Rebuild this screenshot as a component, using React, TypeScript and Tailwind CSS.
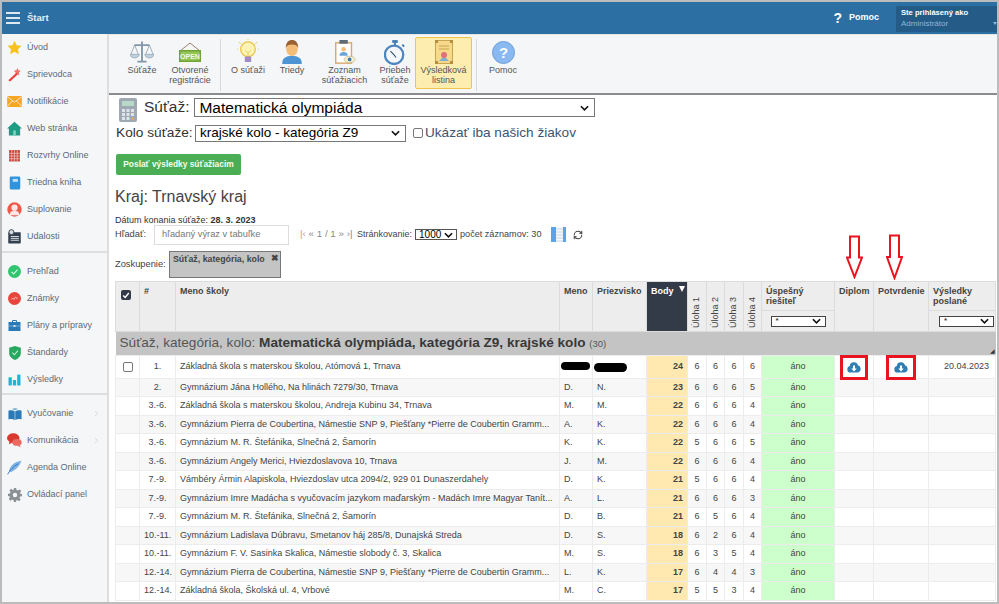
import { type ReactNode } from "react";
import { ChevronRight, RefreshCw } from "lucide-react";

const Svg = ({ children, w = 15, h = 15, box = "0 0 24 24" }: { children: ReactNode; w?: number; h?: number; box?: string }) => (
  <svg width={w} height={h} viewBox={box} className="shrink-0">
    {children}
  </svg>
);

const sideIcons: Record<string, ReactNode> = {
  star: <Svg><path d="M12 1l3.400 7.300 7.800 1-5.700 5.400 1.500 7.900L12 18.700l-7 3.900 1.500-7.900L.8 9.300l7.800-1z" fill="#f7c21e" /></Svg>,
  wand: <Svg><path d="M2 21l13-12 2.500 2.500L5 23z" fill="#e8453c" /><path d="M17 1l1 4 4 1-3 3 1 4-4-2-3 2 1-4-3-3 4-1z" fill="#e8453c" opacity=".75" /></Svg>,
  mail: <Svg w={15} h={11} box="0 0 24 18"><rect width="24" height="18" fill="#f5a623" /><path d="M0 1l12 9 12-9M0 17l9-9M24 17l-9-9" stroke="#fff" fill="none" strokeWidth="1.200" /></Svg>,
  home: <Svg><path d="M12 1L0 12h3v11h18V12h3z" fill="#1e9c84" /><rect x="10" y="15" width="4" height="8" fill="#8fd0c2" /></Svg>,
  grid: <Svg w={13} h={13}><rect x="2" y="2" width="20" height="21" fill="#c9443a" /><path d="M2 8h20M2 13h20M2 18h20M7 2v21M12 2v21M17 2v21" stroke="#f5d5d0" strokeWidth="1.200" /></Svg>,
  book: <Svg w={14} h={14}><rect x="3" y="1" width="18" height="22" rx="2" fill="#2f93dd" /><rect x="8" y="5" width="9" height="5" fill="#bfe0f7" /></Svg>,
  sub: <Svg><circle cx="12" cy="12" r="11.500" fill="#ee5a4a" /><circle cx="12" cy="9" r="5" fill="#fff" opacity=".85" /><path d="M4 21c1-6 4-7 8-7s7 1 8 7z" fill="#fff" opacity=".85" /></Svg>,
  board: <Svg><rect x="2" y="5" width="20" height="18" rx="1" fill="#33404f" /><circle cx="7" cy="5" r="4" fill="#d8dde2" stroke="#33404f" strokeWidth="1.500" /><path d="M6 12h13M6 15h13M6 18h13" stroke="#fff" strokeWidth="1.300" /></Svg>,
  check: <Svg w={13} h={13}><circle cx="12" cy="12" r="12" fill="#30c46f" /><path d="M6.500 12.500l4 4 7-8" stroke="#d8f7e5" strokeWidth="2" fill="none" /></Svg>,
  grade: <Svg w={13} h={13}><circle cx="12" cy="12" r="12" fill="#e8453c" /><path d="M6 14l3-3 2 3 3-5 2 3 2-1" stroke="#f7c6c2" strokeWidth="1.500" fill="none" /></Svg>,
  case: <Svg w={13} h={11} box="0 0 24 22"><path d="M8 4V1h8v3" fill="none" stroke="#2a7ab8" strokeWidth="2" /><rect y="4" width="24" height="18" fill="#2a7ab8" /><path d="M0 12h24" stroke="#cfe3f2" /><rect x="10" y="10" width="4" height="4" fill="#cfe3f2" /></Svg>,
  shield: <Svg w={14} h={14}><path d="M12 0l10 3v9c0 6-5 10-10 12C7 22 2 18 2 12V3z" fill="#27a75f" /><path d="M7.500 11.500l3.500 3.500 6-7" stroke="#c6f0d8" strokeWidth="1.800" fill="none" /></Svg>,
  bars: <Svg w={13} h={13}><rect x="1" y="8" width="6" height="15" fill="#19b5d8" /><rect x="9" y="13" width="6" height="10" fill="#19b5d8" /><rect x="17" y="3" width="6" height="20" fill="#19b5d8" /></Svg>,
  open: <Svg w={14} h={12} box="0 0 24 22"><path d="M0 5c4-1 8-1 11.500 1v16C8 20 4 20 0 21zM24 5c-4-1-8-1-11.500 1v16c3.500-2 7.500-2 11.500-1z" fill="#2a7ab8" /><path d="M6 2l6-2 6 2-6 2z" fill="#7ab4dc" /></Svg>,
  chat: <Svg><ellipse cx="10" cy="8" rx="10" ry="7.500" fill="#d9392e" /><path d="M4 13l-1 5 6-3z" fill="#d9392e" /><ellipse cx="16" cy="15" rx="7.500" ry="5.500" fill="#e96a60" /><path d="M20 19l2 4-6-3z" fill="#e96a60" /></Svg>,
  pen: <Svg><path d="M23 1C13 2 5 8 3 18l3 1C12 17 20 11 23 1z" fill="#7fb2e5" /><path d="M1 23C5 16 10 10 18 6" stroke="#2f78c4" strokeWidth="1.500" fill="none" /></Svg>,
  gear: <Svg w={14} h={14}><path d="M10 0h4l.6 3.400 2.500 1 2.800-2 2.800 2.800-2 2.800 1 2.500L24 10v4l-3.300.6-1 2.500 2 2.800-2.800 2.800-2.800-2-2.500 1L14 24h-4l-.6-3.300-2.500-1-2.800 2-2.800-2.800 2-2.800-1-2.500L0 14v-4l3.400-.6 1-2.500-2-2.800L5.200 1.300l2.800 2 2.500-1z" fill="#8b9094" /><circle cx="12" cy="12" r="3.800" fill="#f5f6f8" /></Svg>,
};

const menu = [
  [["star", "Úvod"], ["wand", "Sprievodca"], ["mail", "Notifikácie"], ["home", "Web stránka"], ["grid", "Rozvrhy Online"], ["book", "Triedna kniha"], ["sub", "Suplovanie"], ["board", "Udalosti"]],
  [["check", "Prehľad"], ["grade", "Známky"], ["case", "Plány a prípravy"], ["shield", "Štandardy"], ["bars", "Výsledky"]],
  [["open", "Vyučovanie", ">"], ["chat", "Komunikácia", ">"], ["pen", "Agenda Online"], ["gear", "Ovládací panel"]],
];

const toolIcons: Record<string, ReactNode> = {
  scales: <Svg w={24} h={24} box="0 0 26 25"><path d="M13 1v21M5 5h16M8 23h10" stroke="#8296a8" strokeWidth="2" fill="none" /><path d="M5 5L1 15M5 5l4 10M21 5l-4 10M21 5l4 10" stroke="#8296a8" strokeWidth=".8" /><path d="M0 15h10a5 4 0 0 1-10 0zM16 15h10a5 4 0 0 1-10 0z" fill="#bcd0e0" stroke="#8296a8" strokeWidth=".6" /></Svg>,
  open: <Svg w={22} h={20} box="0 0 22 20"><path d="M1 9l10-8 10 8" stroke="#99806a" fill="none" /><rect y="8" width="22" height="12" fill="#6fa336" /><rect x="1.500" y="9.500" width="19" height="9" fill="#93c653" /><text x="11" y="16.800" textAnchor="middle" fontSize="7" fontWeight="700" fill="#f4fbe6" fontFamily="Liberation Sans">OPEN</text></Svg>,
  bulb: <Svg w={22} h={26} box="0 0 24 28"><circle cx="12" cy="11" r="8" fill="#fff3b5" stroke="#e8c64c" strokeWidth="1.500" /><path d="M9 12l3 3 3-3M12 15v4" stroke="#e8c64c" fill="none" /><rect x="8.500" y="19" width="7" height="6" rx="1" fill="#a08bc4" /><path d="M12 0v1M2 3l2 2M22 3l-2 2M0 11h1M24 11h-1" stroke="#e8c64c" /></Svg>,
  user: <Svg w={20} h={24} box="0 0 22 27"><path d="M0 27c0-7 4-9 11-9s11 2 11 9z" fill="#4d94d4" /><ellipse cx="11" cy="10" rx="6.500" ry="8" fill="#f3bd78" /><path d="M4 9c0-6 3-9 7-9s7 3 7 9c-1-3-3-4-7-4s-6 1-7 4z" fill="#9a6133" /></Svg>,
  clip: <Svg w={22} h={25} box="0 0 22 27"><rect x="1" y="3" width="17" height="22" fill="#fff" stroke="#d9a66c" strokeWidth="1.500" /><rect x="5" y="0" width="9" height="4" fill="#5d6a78" /><circle cx="9.500" cy="10" r="2.500" fill="#f3bd78" /><path d="M5 17c0-3 2-4 4.500-4s4.500 1 4.500 4z" fill="#6aa5dc" /><ellipse cx="16" cy="21" rx="6" ry="3.500" fill="#f3f0d0" stroke="#b9a560" strokeWidth=".6" /><circle cx="16" cy="21" r="2" fill="#3f78b0" /></Svg>,
  watch: <Svg w={22} h={25} box="0 0 24 27"><rect x="9" y="0" width="6" height="3" fill="#3f78b0" /><path d="M12 3v3M20 5l2 2" stroke="#3f78b0" strokeWidth="2" /><circle cx="11" cy="16" r="10" fill="#f4f8fc" stroke="#4d86bf" strokeWidth="2.500" /><path d="M11 16L7 12M11 16l2 3" stroke="#33506e" strokeWidth="1.200" /></Svg>,
  cert: <Svg w={18} h={24} box="0 0 18 24"><rect x=".5" y=".5" width="17" height="23" fill="#f6d98a" stroke="#c7a550" /><rect width="3" height="3" fill="#b58f3e" /><rect x="15" width="3" height="3" fill="#b58f3e" /><rect y="21" width="3" height="3" fill="#b58f3e" /><rect x="15" y="21" width="3" height="3" fill="#b58f3e" /><path d="M4 6h10M4 9h10" stroke="#c7a550" /><path d="M4 21l5-5 5 5z" fill="#7fb0d0" /><circle cx="9" cy="15" r="3" fill="#e0707c" /></Svg>,
  help: <Svg w={23} h={23} box="0 0 23 23"><circle cx="11.500" cy="11.500" r="11" fill="#8ab8f0" stroke="#6d9fd8" /><text x="11.500" y="17" textAnchor="middle" fontSize="15" fontWeight="700" fill="#fff" fontFamily="Liberation Sans">?</text></Svg>,
};

const tools = [
  { icon: "scales", lines: ["Súťaže"], w: "w-[48px]" },
  { icon: "open", lines: ["Otvorené", "registrácie"], w: "w-[48px]" },
  { sep: "ml-[6px] mr-[5px]" },
  { icon: "bulb", lines: ["O súťaži"], w: "w-[44px]" },
  { icon: "user", lines: ["Triedy"], w: "w-[44px]" },
  { icon: "clip", lines: ["Zoznam", "súťažiacich"], w: "w-[61px]" },
  { icon: "watch", lines: ["Priebeh", "súťaže"], w: "w-[40px]" },
  { icon: "cert", lines: ["Výsledková", "listina"], w: "w-[57px]", active: true },
  { sep: "ml-[4px] mr-[2px]" },
  { icon: "help", lines: ["Pomoc"], w: "w-[48px]" },
];

const rows = [
  ["2.", "Gymnázium Jána Hollého, Na hlinách 7279/30, Trnava", "D.", "N.", 23, 6, 6, 6, 5],
  ["3.-6.", "Základná škola s materskou školou, Andreja Kubinu 34, Trnava", "M.", "M.", 22, 6, 6, 6, 4],
  ["3.-6.", "Gymnázium Pierra de Coubertina, Námestie SNP 9, Piešťany *Pierre de Coubertin Gramm...", "A.", "K.", 22, 6, 6, 6, 4],
  ["3.-6.", "Gymnázium M. R. Štefánika, Slnečná 2, Šamorín", "K.", "K.", 22, 5, 6, 6, 5],
  ["3.-6.", "Gymnázium Angely Merici, Hviezdoslavova 10, Trnava", "J.", "M.", 22, 6, 6, 6, 4],
  ["7.-9.", "Vámbéry Ármin Alapiskola, Hviezdoslav utca 2094/2, 929 01 Dunaszerdahely", "D.", "K.", 21, 5, 6, 6, 4],
  ["7.-9.", "Gymnázium Imre Madácha s vyučovacím jazykom maďarským - Madách Imre Magyar Tanít...", "A.", "L.", 21, 6, 6, 6, 3],
  ["7.-9.", "Gymnázium M. R. Štefánika, Slnečná 2, Šamorín", "D.", "B.", 21, 6, 5, 6, 4],
  ["10.-11.", "Gymnázium Ladislava Dúbravu, Smetanov háj 285/8, Dunajská Streda", "D.", "S.", 18, 6, 2, 6, 4],
  ["10.-11.", "Gymnázium F. V. Sasinka Skalica, Námestie slobody č. 3, Skalica", "M.", "S.", 18, 6, 3, 5, 4],
  ["12.-14.", "Gymnázium Pierra de Coubertina, Námestie SNP 9, Piešťany *Pierre de Coubertin Gramm...", "L.", "K.", 17, 6, 4, 4, 3],
  ["12.-14.", "Základná škola, Školská ul. 4, Vrbové", "M.", "C.", 17, 5, 5, 3, 4],
];

const CloudDown = () => (
  <svg width="14" height="11" viewBox="0 0 28 22">
    <path d="M7 21a6.500 6.500 0 0 1-1.500-12.800A8.500 8.500 0 0 1 22 6.500 7.500 7.500 0 0 1 21.500 21z" fill="#2f7fb5" />
    <path d="M12 7h4v6h3.500L14 19l-5.500-6H12z" fill="#fff" />
  </svg>
);

const td = "border border-[#ececec] px-1 text-[9px] text-[#444] whitespace-nowrap";
const th = "border border-[#dcdcdc] bg-[#ededed] px-1 py-[4px] text-left align-top text-[9px] font-bold text-[#444] leading-[10px]";

function Arrow({ size = 6 }: { size?: number }) {
  return (
    <svg width={size + 3} height={size} viewBox="0 0 10 6"><path d="M1 1l4 4 4-4" stroke="#111" strokeWidth="1.800" fill="none" /></svg>
  );
}

function FilterSelect({ shift = "mx-auto" }: { shift?: string }) {
  return (
    <div className={`${shift} flex h-[11px] w-[55px] items-center justify-between border border-[#444] bg-white px-1 text-[8px] leading-none text-[#444]`}>
      <span>*</span>
      <Arrow />
    </div>
  );
}

export default function App() {
  return (
    <div className="relative h-[604px] w-[999px] overflow-hidden bg-[#bcbcbc] p-[2px] font-['Liberation_Sans',Arial,sans-serif]">
      <div className="flex h-[600px] flex-col overflow-hidden bg-white">
        <header className="flex h-[32px] shrink-0 items-center bg-[#2c6fa3] text-white">
          <div className="ml-[4px] flex w-[14px] flex-col gap-[3px]">
            <span className="h-[2px] bg-[#dce8f2]" /><span className="h-[2px] bg-[#dce8f2]" /><span className="h-[2px] bg-[#dce8f2]" />
          </div>
          <span className="ml-[7px] text-[9.500px] font-bold text-[#e6eff6]">Štart</span>
          <span className="ml-auto mr-[7px] text-[14px] font-bold">?</span>
          <span className="mr-[17px] text-[9px] font-bold">Pomoc</span>
          <div className="relative mb-[-1px] h-[26px] w-[101px] rounded-tl-[2px] bg-[#245b87] pl-[5px] pt-[1px] leading-[11px]">
            <div className="text-[7.600px] font-bold text-white">Ste prihlásený ako</div>
            <div className="text-[8px] text-[#8fb6d8]">Administrátor</div>
            <span className="absolute bottom-[7px] right-0 border-x-[2px] border-t-[3px] border-x-transparent border-t-[#8fb6d8]" />
          </div>
        </header>

        <div className="flex min-h-0 flex-1">
          <aside className="w-[107px] shrink-0 border-r-2 border-[#dedede] bg-[#f5f6f8]">
            {menu.map((group, gi) => (
              <div key={gi} className={gi === 0 ? "pb-[1px]" : "border-t-2 border-[#dedede] pt-[5px]"}>
                {group.map(([icon, label, more]) => (
                  <div key={label} className="flex h-[27px] items-center text-[9px] text-[#5e6a75]">
                    <span className="flex w-[25px] shrink-0 justify-center">{sideIcons[icon]}</span>
                    <span className="whitespace-nowrap">{label}</span>
                    {more && <ChevronRight size={9} className="ml-auto mr-[6px] text-[#ccc]" />}
                  </div>
                ))}
              </div>
            ))}
          </aside>

          <main className="min-w-0 flex-1">
            <div className="flex h-[61px] items-start border-b-2 border-t border-b-[#8b8b8f] border-t-[#e6e6e6] bg-[#f5f6f8] pl-[9px] pt-[2px]">
              {tools.map((t, i) =>
                t.sep ? (
                  <span key={i} className={`${t.sep} mt-[2px] h-[52px] w-px bg-[#d8d8d8]`} />
                ) : (
                  <div
                    key={i}
                    className={`flex h-[52px] ${t.w} flex-col items-center rounded-[2px] border pt-[1px] text-center text-[9px] leading-[10px] text-[#555] ${t.active ? "border-[#f3c44a] bg-[#fdeeb0]" : "border-transparent"}`}
                  >
                    <span className="flex h-[26px] items-center">{toolIcons[t.icon!]}</span>
                    {t.lines!.map((l) => (
                      <span key={l} className="whitespace-nowrap">{l}</span>
                    ))}
                  </div>
                )
              )}
            </div>

            <div className="pl-[6px] pt-[3px]">
              <div className="flex h-[22px] items-start">
                <svg width="18" height="24" viewBox="0 0 18 24" className="ml-[4px] mr-[7px] shrink-0">
                  <rect width="18" height="24" rx="2" fill="#9fa9b4" />
                  <rect x="3" y="3" width="12" height="5" fill="#b9d9c8" />
                  <path d="M3 11h3v3H3zM7.500 11h3v3h-3zM12 11h3v3h-3zM3 15h3v3H3zM7.500 15h3v3h-3zM12 15h3v3h-3zM3 19h3v3H3zM7.500 19h3v3h-3z" fill="#dfe4ea" />
                  <path d="M12 19h3v3h-3z" fill="#e8a15a" />
                </svg>
                <span className="mr-[5px] text-[15.500px] leading-[18px] text-[#333]">Súťaž:</span>
                <div className="flex h-[19px] w-[401px] items-center justify-between border border-[#777] bg-white pl-[4px] pr-[5px] text-[15.500px] leading-none text-black">
                  <span>Matematická olympiáda</span>
                  <Arrow />
                </div>
              </div>
              <div className="ml-[1px] mt-[4px] flex h-[18px] items-center">
                <span className="w-[79px] whitespace-nowrap text-[13.700px] text-[#333]">Kolo súťaže:</span>
                <div className="flex h-[17px] w-[211px] items-center justify-between border border-[#777] bg-white pl-[4px] pr-[5px] text-[13.500px] leading-none text-black">
                  <span>krajské kolo - kategória Z9</span>
                  <Arrow />
                </div>
                <span className="ml-[7px] mr-[2px] h-[10px] w-[10px] rounded-[2px] border border-[#777] bg-white" />
                <span className="text-[13.600px] text-[#3b5573]">Ukázať iba našich žiakov</span>
              </div>
              <button className="ml-[1px] mt-[12px] flex h-[21px] w-[125px] items-center justify-center rounded-[2px] bg-[#4cae54] text-[8.400px] font-bold text-[#f0fff0]">
                Poslať výsledky súťažiacim
              </button>
              <h2 className="mt-[12px] text-[16px] leading-[20px] text-[#444]">Kraj: Trnavský kraj</h2>
              <div className="mt-[8px] text-[9px] leading-[11px] text-[#333]">
                Dátum konania súťaže: <span className="font-bold">28. 3. 2023</span>
              </div>
              <div className="mt-[-2px] flex h-[21px] items-center text-[9.300px] text-[#444]">
                <span className="w-[39px]">Hľadať:</span>
                <div className="flex h-[20px] w-[135px] items-center border border-[#ddd] pl-[7px] text-[#777]">hľadaný výraz v tabuľke</div>
                <span className="ml-[11px] w-[54px] whitespace-nowrap text-[9.800px] text-[#888]"><span className="text-[#d29a9a]">|‹</span> « 1 / 1 » ›|</span>
                <span className="ml-[3px] text-[9px]">Stránkovanie:</span>
                <div className="ml-[3px] flex h-[11px] w-[42px] items-center justify-between border border-[#555] px-[3px] text-[10px] leading-none text-black">
                  1000
                  <Arrow />
                </div>
                <span className="ml-[3px] text-[9.100px]">počet záznamov: 30</span>
                <span className="ml-[10px] flex h-[15px] w-[15px] overflow-hidden">
                  <span className="w-[5px] bg-[#5ba4ea]" />
                  <span className="flex-1 bg-[repeating-linear-gradient(0deg,#dfe8f2_0,#dfe8f2_2px,#f6f8fa_2px,#f6f8fa_3px)]" />
                  <span className="w-[3px] bg-[#5ba4ea]" />
                </span>
                <RefreshCw size={10} strokeWidth={2.500} className="ml-[7px] text-[#444]" />
              </div>
              <div className="mt-[6px] flex h-[27px] items-center">
                <span className="w-[54px] text-[9.300px] text-[#444]">Zoskupenie:</span>
                <div className="flex h-[27px] w-[112px] items-start justify-between border border-[#777] bg-[#c4c4c4] pl-[3px] pr-[1px] pt-[1px] text-[8.800px] font-bold text-[#444]">
                  <span>Súťaž, kategória, kolo</span>
                  <span className="text-[9px] leading-[11px]">✖</span>
                </div>
              </div>
            </div>

            <table className="ml-[6px] mt-[3px] w-[880px] table-fixed border-collapse text-left">
              <colgroup>
                {[24, 36, 384, 33, 54, 41, 19, 18, 19, 18, 73, 39, 55, 67].map((w, i) => (
                  <col key={i} style={{ width: w }} />
                ))}
              </colgroup>
              <thead>
                <tr className="h-[28px]">
                  <th rowSpan={2} className={th}>
                    <span className="ml-[1px] mt-[4px] flex h-[10px] w-[10px] items-center justify-center rounded-[2px] bg-[#333a48]">
                      <svg width="8" height="8" viewBox="0 0 10 10"><path d="M1.500 5.500l2.500 2.500 4.500-5.500" stroke="#fff" strokeWidth="1.800" fill="none" /></svg>
                    </span>
                  </th>
                  <th rowSpan={2} className={th}>#</th>
                  <th rowSpan={2} className={th}>Meno školy</th>
                  <th rowSpan={2} className={th}>Meno</th>
                  <th rowSpan={2} className={th}>Priezvisko</th>
                  <th rowSpan={2} className="relative border border-[#dcdcdc] bg-[#333a48] px-1 py-[4px] text-left align-top text-[9px] font-bold leading-[10px] text-white">
                    Body
                    <span className="absolute right-[2px] top-[4px] border-x-[3.500px] border-t-[6px] border-x-transparent border-t-white" />
                  </th>
                  {[1, 2, 3, 4].map((n) => (
                    <th key={n} rowSpan={2} className="border border-[#dcdcdc] bg-[#ededed] p-0 pb-[3px] align-bottom">
                      <span className="mx-auto block rotate-180 whitespace-nowrap text-left text-[9px] font-normal leading-[17px] text-[#444] [writing-mode:vertical-rl]">
                        Úloha {n}
                      </span>
                    </th>
                  ))}
                  <th className={th}>Úspešný<br />riešiteľ</th>
                  <th rowSpan={2} className={th}>Diplom</th>
                  <th rowSpan={2} className={th}>Potvrdenie</th>
                  <th className={th}>Výsledky<br />poslané</th>
                </tr>
                <tr className="h-[21px]">
                  <th className="border border-[#dcdcdc] bg-[#ededed] p-0"><FilterSelect /></th>
                  <th className="border border-[#dcdcdc] bg-[#ededed] p-0"><FilterSelect shift="ml-[10px]" /></th>
                </tr>
              </thead>
              <tbody>
                <tr className="h-[24px] bg-[#c4c4c4]">
                  <td colSpan={14} className="relative whitespace-nowrap px-1 text-[13.600px] text-[#555]">
                    Súťaž, kategória, kolo: <span className="font-bold text-[#383838]">Matematická olympiáda, kategória Z9, krajské kolo</span>{" "}
                    <span className="text-[9.500px]">(30)</span>
                    <span className="absolute bottom-[1px] right-[1px] text-[6px] leading-none text-[#333]">◢</span>
                  </td>
                </tr>
                <tr className="h-[23px]">
                  <td className={td}><span className="ml-[3px] block h-[10px] w-[10px] rounded-[2px] border border-[#777]" /></td>
                  <td className={`${td} text-center`}>1.</td>
                  <td className={td}>Základná škola s materskou školou, Atómová 1, Trnava</td>
                  <td className={td}><span className="mb-[2px] block h-[8px] w-[29px] -translate-x-[3px] rounded-full bg-black" /></td>
                  <td className={td}><span className="mt-[1px] block h-[9px] w-[33px] -translate-x-[3px] rounded-full bg-black" /></td>
                  <td className={`${td} bg-[#ffe9b0] text-right font-bold`}>24</td>
                  {[6, 6, 6, 6].map((v, i) => <td key={i} className={`${td} px-0 text-center`}>{v}</td>)}
                  <td className={`${td} bg-[#ccffcc] text-center`}>áno</td>
                  <td className="border border-[#ececec] p-0">
                    <div className="relative mx-auto -my-[2px] flex h-[25px] w-[28px] items-center justify-center border-[3px] border-[#e8141f]"><CloudDown /></div>
                  </td>
                  <td className="border border-[#ececec] p-0">
                    <div className="relative mx-auto -my-[2px] flex h-[25px] w-[30px] items-center justify-center border-[3px] border-[#e8141f]"><CloudDown /></div>
                  </td>
                  <td className={`${td} pl-[15px]`}>20.04.2023</td>
                </tr>
                {rows.map((r, i) => (
                  <tr key={i} className={`${i % 2 ? "h-[19px]" : "h-[18px] bg-[#f7f7f7]"}`}>
                    <td className={td} />
                    <td className={`${td} text-center`}>{r[0]}</td>
                    <td className={td}>{r[1]}</td>
                    <td className={td}>{r[2]}</td>
                    <td className={td}>{r[3]}</td>
                    <td className={`${td} bg-[#ffe9b0] text-right font-bold`}>{r[4]}</td>
                    {r.slice(5).map((v, j) => (
                      <td key={j} className={`${td} px-0 text-center`}>{v}</td>
                    ))}
                    <td className={`${td} bg-[#ccffcc] text-center`}>áno</td>
                    <td className={td} />
                    <td className={td} />
                    <td className={td} />
                  </tr>
                ))}
              </tbody>
            </table>
          </main>
        </div>
      </div>

      <svg width="17" height="44" viewBox="0 0 17 44" className="absolute left-[846px] top-[235px]">
        <path d="M4 1.500h9v21h3L8.500 42 1 22.500h3z" fill="#fff" stroke="#e8141f" strokeWidth="2" />
      </svg>
      <svg width="17" height="46" viewBox="0 0 17 46" className="absolute left-[886px] top-[234px]">
        <path d="M4 1.500h9v21.500h3L8.500 44 1 23h3z" fill="#fff" stroke="#e8141f" strokeWidth="2" />
      </svg>
    </div>
  );
}
